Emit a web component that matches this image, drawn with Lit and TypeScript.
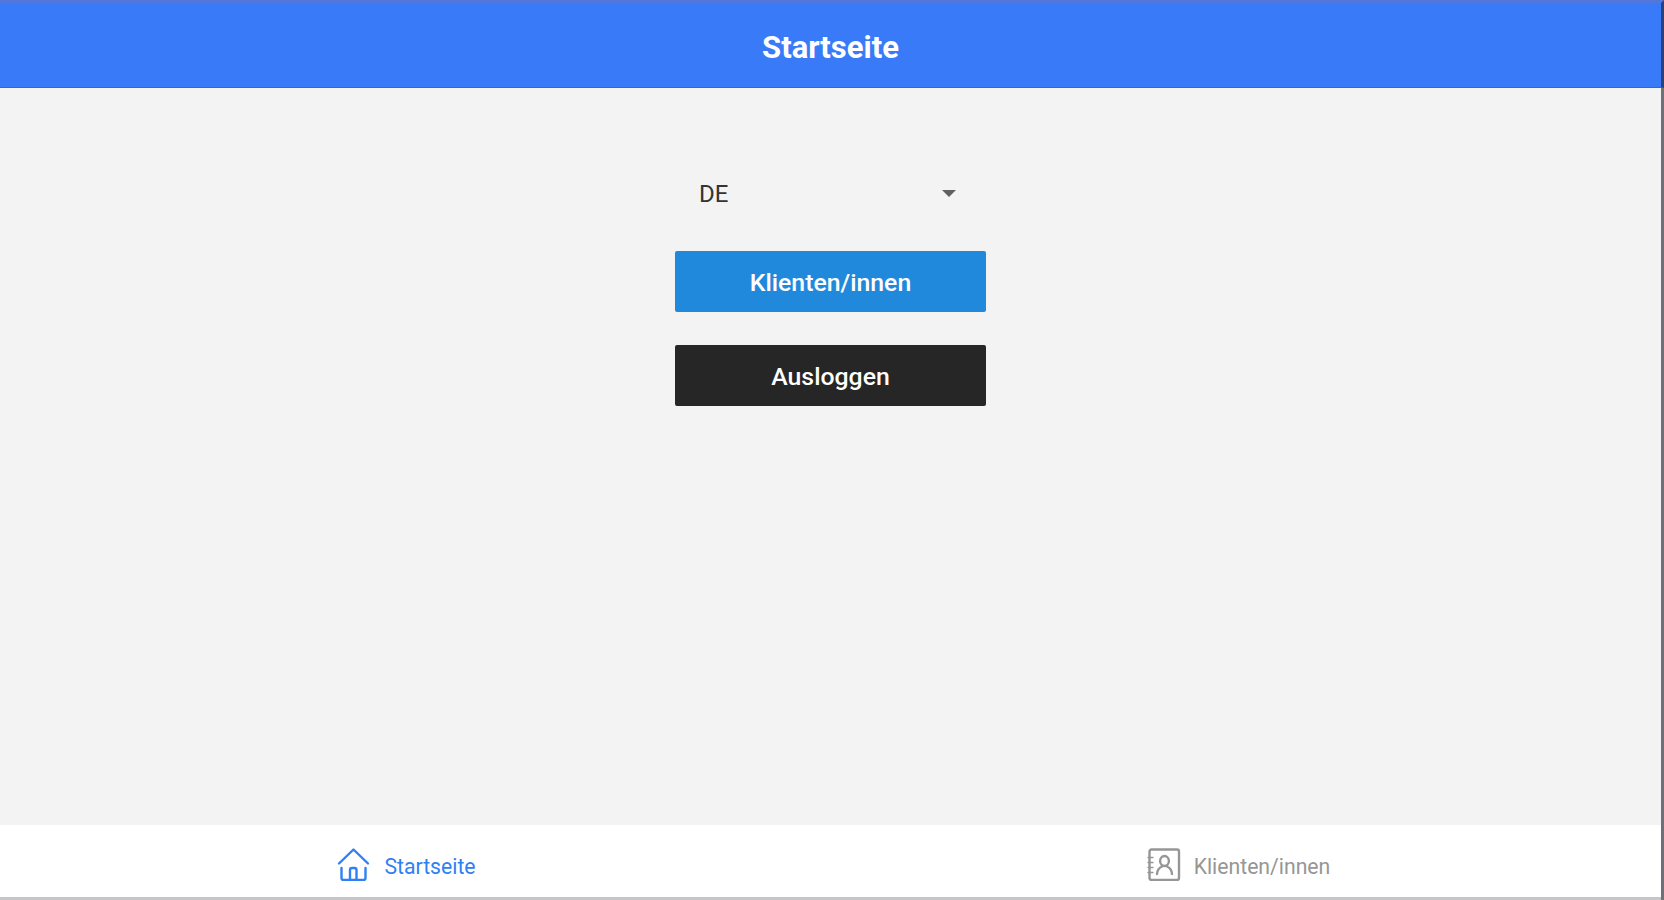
import {LitElement, html, css, svg} from 'lit';
import {customElement, property, state} from 'lit/decorators.js';
import {classMap} from 'lit/directives/class-map.js';

const homeIcon = svg`
  <path d="M2 16.500 L16.500 2.500 L31 16.500" />
  <path d="M4.500 21 V31 Q4.500 33 6.500 33 H26.500 Q28.500 33 28.500 31 V21" />
  <path d="M13 32 V23 Q13 21 15 21 H17.500 Q19.500 21 19.500 23 V32" />
`;

const contactsIcon = svg`
  <rect x="2.500" y="2.500" width="29.500" height="30.500" rx="2" />
  <ellipse cx="17.500" cy="14" rx="4.400" ry="5" />
  <path d="M10 27 Q10.300 21.500 15 19.500 M25 27 Q24.700 21.500 20 19.500" />
  <path class="thin" d="M1 10.500 H6 M1 15.500 H6 M1 20.500 H6 M1 25.500 H6" />
`;

@customElement('app-tab')
export class AppTab extends LitElement {
  @property() label = '';
  @property() icon = 'home';
  @property({type: Boolean}) active = false;

  static styles = css`
    :host {
      display: flex;
      justify-content: center;
      cursor: pointer;
    }

    .tab {
      display: flex;
      align-items: center;
      gap: 13px;
      color: #969696;
      line-height: 28px;
    }

    .active {
      color: #2f80f5;
    }

    .label {
      font-size: 21.200px;
      padding-top: 5px;
    }

    svg {
      display: block;
      width: 34px;
      height: 34px;
      fill: none;
      stroke: currentColor;
      stroke-width: 2.400;
      stroke-linecap: round;
      stroke-linejoin: round;
    }

    .thin {
      stroke-width: 1.300;
    }
  `;

  render() {
    return html`
      <div class=${classMap({tab: true, active: this.active})}>
        <svg viewBox="0 0 34 34">${this.icon === 'home' ? homeIcon : contactsIcon}</svg>
        <span class="label">${this.label}</span>
      </div>
    `;
  }
}

@customElement('app-root')
export class AppRoot extends LitElement {
  @state() page = 'home';

  static styles = css`
    :host {
      display: flex;
      flex-direction: column;
      box-sizing: border-box;
      height: 100vh;
      background: #f3f3f3;
      border-right: 3px solid #707076;
      font-family: Roboto, sans-serif;
    }

    .header {
      display: flex;
      align-items: center;
      justify-content: center;
      box-sizing: border-box;
      height: 88px;
      margin-right: -3px;
      background: #397af8;
      border-top: 3px solid #5277dc;
      border-right: 3px solid #2c3f78;
      border-bottom: 1px solid #1470f2;
    }

    .title {
      margin: 0;
      padding-top: 6px;
      color: #fff;
      font-size: 31px;
      font-weight: 700;
      line-height: 36px;
    }

    .content {
      flex: 1;
      display: flex;
      flex-direction: column;
      align-items: center;
    }

    .picker {
      display: flex;
      align-items: center;
      justify-content: space-between;
      box-sizing: border-box;
      width: 311px;
      height: 62px;
      margin: 75px 0 26px;
      padding: 0 30px 0 24px;
      color: #333;
      font-size: 24px;
    }

    .arrow {
      margin-bottom: 2px;
      border: 7px solid transparent;
      border-top-color: #606060;
      border-bottom: 0;
    }

    .button {
      width: 311px;
      height: 61px;
      margin-bottom: 33px;
      padding: 1px 0 0;
      border: 0;
      border-radius: 2px;
      background: #2189dc;
      color: #fff;
      font-family: inherit;
      font-size: 24.800px;
      font-weight: 500;
    }

    .dark {
      background: #262626;
    }

    .tabs {
      display: grid;
      grid-template-columns: 1fr 1fr;
      column-gap: 19px;
      align-items: center;
      box-sizing: border-box;
      height: 75px;
      padding: 6px 16px 0 0;
      background: #fff;
      border-bottom: 3px solid #c6c6c9;
    }
  `;

  render() {
    return html`
      <header class="header"><h1 class="title">Startseite</h1></header>
      <main class="content">
        <div class="picker">
          <span>DE</span>
          <span class="arrow"></span>
        </div>
        <button class="button">Klienten/innen</button>
        <button class="button dark">Ausloggen</button>
      </main>
      <nav class="tabs">
        <app-tab icon="home" label="Startseite" ?active=${this.page === 'home'} @click=${() => (this.page = 'home')}></app-tab>
        <app-tab icon="contacts" label="Klienten/innen" ?active=${this.page === 'clients'} @click=${() => (this.page = 'clients')}></app-tab>
      </nav>
    `;
  }
}
